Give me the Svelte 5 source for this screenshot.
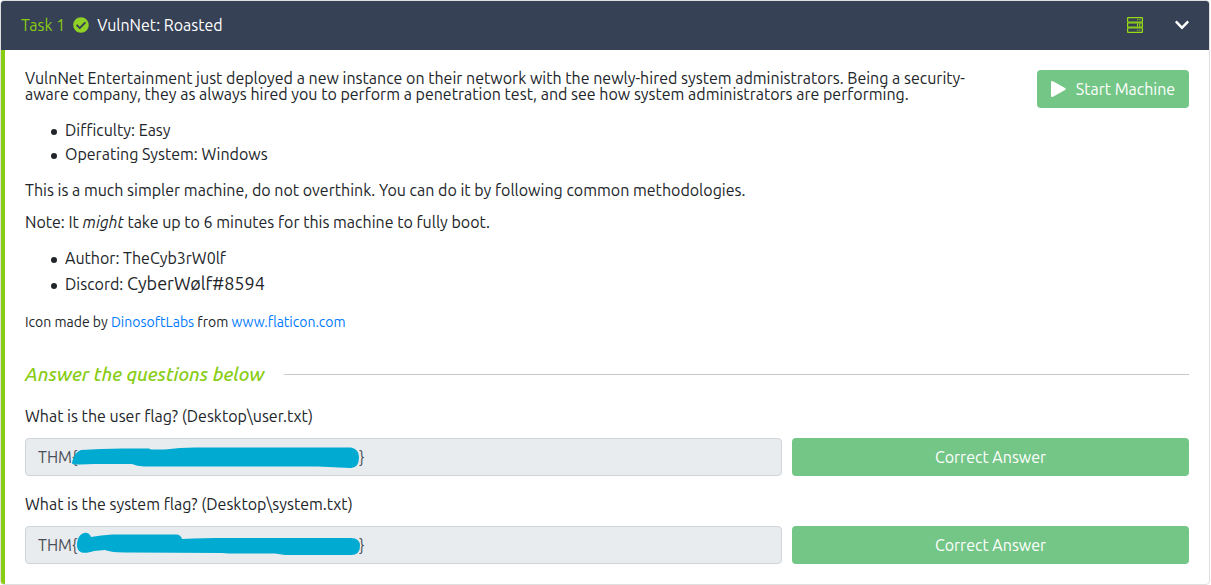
<script>
  const gap = '\u00a0'.repeat(77);
  const questions = [
    {
      id: 'user-flag',
      label: 'What is the user flag? (Desktop\\user.txt)',
      value: `THM{${gap}}`,
      marker:
        'M47 25C48 20 50 14 56 12L76 11L98 10.500L124 10.500L126 11.500L140 11.500Q155 9.500 170 9.500L326 9.500Q334 11 334 19Q334 30 326 30L314 29.500L293 28.500L280 28.500L119 28.500Q112 28 107 26L70 26L55 26.500Q47 27 47 25Z'
    },
    {
      id: 'system-flag',
      label: 'What is the system flag? (Desktop\\system.txt)',
      value: `THM{${gap}}`,
      marker:
        'M52 19C52 8 61 4 65 9L66 11Q76 9 87 8.500L152 8.500Q156 9 157 13L168 12.500L190 12L326 12Q335 12 335 20Q335 29 326 29L260 29L250 27.500L204 27.500L197 27L105 26.500Q85 26.500 80 24L69 25C60 28 52 28 52 19Z'
    }
  ];
</script>

<article class="task">
  <header>
    <h1>
      <span class="number">Task 1</span>
      <svg width="16" height="16" viewBox="0 0 512 512" aria-hidden="true">
        <path fill="#8fd127" d="M504 256c0 137-111 248-248 248S8 393 8 256 119 8 256 8s248 111 248 248zM227.300 387.300l184-184c6.200-6.200 6.200-16.400 0-22.600l-22.600-22.600c-6.200-6.200-16.400-6.200-22.600 0L216 308.100l-70.100-70.100c-6.200-6.200-16.400-6.200-22.600 0l-22.600 22.600c-6.200 6.200-6.200 16.400 0 22.600l104 104c6.200 6.300 16.400 6.300 22.600.1z" />
      </svg>
      <span>VulnNet: Roasted</span>
    </h1>
    <div class="tools">
      <svg width="16" height="16" viewBox="0 0 16 16" fill="none" stroke="#98dc14" aria-hidden="true">
        <rect x=".6" y=".6" width="14.800" height="4.400" rx=".4" stroke-width="1.200" />
        <rect x=".6" y="5.800" width="14.800" height="4.400" rx=".4" stroke-width="1.200" />
        <rect x=".6" y="11" width="14.800" height="4.400" rx=".4" stroke-width="1.200" />
        <path d="M10 2.800h1.200M12.200 2.800h1.200M10.500 6.500v3M12.700 6.500v3M10 13.200h1.200M12.200 13.200h1.200" stroke-width="1.100" />
      </svg>
      <button class="toggle" type="button" aria-label="Collapse task">
        <svg width="14" height="16" viewBox="0 0 448 512" aria-hidden="true">
          <path fill="#fff" d="M207 381.500L12.700 187.100c-9.400-9.400-9.400-24.600 0-33.900l22.700-22.700c9.400-9.400 24.500-9.400 33.900 0L224 284.500l154.700-154c9.400-9.300 24.500-9.300 33.900 0l22.700 22.700c9.400 9.400 9.400 24.600 0 33.900L241 381.500c-9.400 9.400-24.600 9.400-34 0z" />
        </svg>
      </button>
    </div>
  </header>

  <div class="body">
    <div class="intro">
      <p>
        VulnNet Entertainment just deployed a new instance on their network with the newly-hired system administrators. Being a security-aware company, they as always hired you to perform a penetration test, and see how system administrators are performing.
      </p>
      <button class="green start" type="button">
        <svg width="15" height="16" viewBox="0 0 15 16" aria-hidden="true">
          <path fill="#fff" d="M0 1.500Q0-.6 2 .3L14 7Q15.500 8 14 9L2 15.700Q0 16.600 0 14.500Z" />
        </svg>
        Start Machine
      </button>
    </div>
    <ul>
      <li>Difficulty: Easy</li>
      <li>Operating System: Windows</li>
    </ul>
    <p>This is a much simpler machine, do not overthink. You can do it by following common methodologies.</p>
    <p>Note: It <em>might</em> take up to 6 minutes for this machine to fully boot.</p>
    <ul>
      <li>Author: TheCyb3rW0lf</li>
      <li class="discord">Discord: <span>CyberWølf#8594</span></li>
    </ul>
    <p class="credit">Icon made by <a href="#dinosoft">DinosoftLabs</a> from <a href="#flaticon">www.flaticon.com</a></p>

    <h2>Answer the questions below</h2>

    {#each questions as q}
      <section class="question">
        <label for={q.id}>{q.label}</label>
        <div class="row">
          <div class="field">
            <input id={q.id} type="text" value={q.value} readonly />
            <svg class="marker" width="340" height="38" viewBox="0 0 340 38" aria-hidden="true">
              <path fill="#00aad0" d={q.marker} />
            </svg>
          </div>
          <button class="green" type="button">Correct Answer</button>
        </div>
      </section>
    {/each}
  </div>
</article>

<style>
  :global(body) {
    margin: 0;
    background: #fff;
  }
  * {
    box-sizing: border-box;
  }
  .task {
    margin-right: 1px;
    border: 1px solid #dfdfdf;
    border-radius: 4px;
    overflow: hidden;
    color: #212529;
    font-family: Ubuntu, 'Noto Sans', sans-serif;
    font-size: 16px;
    line-height: 16px;
  }
  header {
    display: flex;
    align-items: center;
    justify-content: space-between;
    height: 49px;
    padding: 0 20px 1px;
    background: #364156;
  }
  h1 {
    display: flex;
    align-items: center;
    gap: 8px;
    margin: 0;
    font-size: 16px;
    font-weight: 400;
    color: #fff;
  }
  .number {
    color: #88cc14;
  }
  .tools {
    display: flex;
    align-items: center;
    gap: 32px;
  }
  svg {
    display: block;
    flex: none;
  }
  button {
    border: 0;
    font: inherit;
    color: #fff;
  }
  .toggle {
    padding: 0;
    background: none;
  }
  .body {
    padding: 20px;
    border-left: 4px solid #88cc14;
  }
  .intro {
    display: flex;
    align-items: flex-start;
    justify-content: space-between;
    gap: 48px;
    margin-bottom: 10px;
  }
  p {
    margin: 0 0 16px;
  }
  .intro p {
    margin: 0;
  }
  .green {
    height: 38px;
    border-radius: 4px;
    background: #73c686;
  }
  .start {
    display: flex;
    flex: none;
    align-items: center;
    justify-content: center;
    gap: 10px;
    width: 152px;
    padding: 0;
  }
  ul {
    margin: 0 0 16px;
    padding-left: 26px;
    line-height: 24px;
    list-style: none;
  }
  li::before {
    content: '';
    display: inline-block;
    width: 6px;
    height: 6px;
    margin-right: 8px;
    border-radius: 50%;
    background: #212529;
    vertical-align: middle;
  }
  .discord {
    line-height: 27px;
  }
  .discord span {
    font-size: 18px;
  }
  .credit {
    font-size: 14px;
  }
  a {
    color: #007bff;
    text-decoration: none;
  }
  h2 {
    display: flex;
    align-items: center;
    gap: 20px;
    margin: 32px 0 22px;
    font-size: 19px;
    font-style: italic;
    font-weight: 500;
    line-height: 24px;
    color: #88cc14;
  }
  h2::after {
    content: '';
    flex: 1;
    height: 1px;
    background: #c8c8c8;
  }
  .question + .question {
    margin-top: 20px;
  }
  label {
    display: block;
    margin-bottom: 14px;
  }
  .row {
    display: grid;
    grid-template-columns: 656fr 344fr;
    gap: 10px;
  }
  .field {
    position: relative;
  }
  input {
    display: block;
    width: 100%;
    height: 38px;
    padding: 0 12px;
    border: 1px solid #ced4da;
    border-radius: 4px;
    background: #e9ecef;
    color: #495057;
    font: inherit;
  }
  .marker {
    position: absolute;
    top: 0;
    left: 0;
    pointer-events: none;
  }
</style>
